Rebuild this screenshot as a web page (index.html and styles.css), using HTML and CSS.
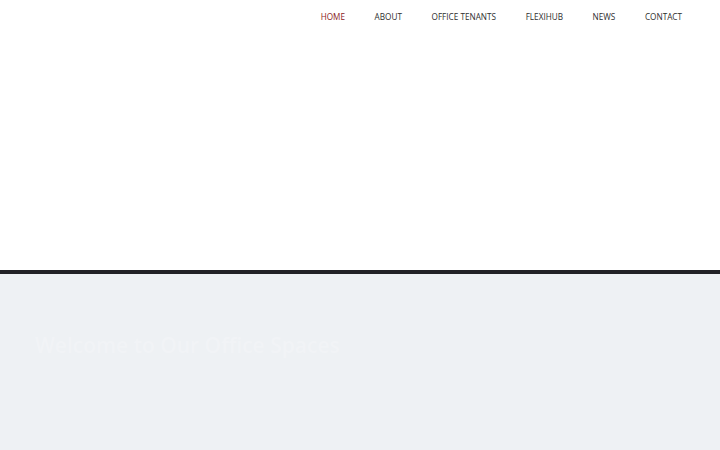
FILE: index.html
```html
<!DOCTYPE html>
<html lang="en">
<head>
<meta charset="utf-8">
<title>Home</title>
<link rel="stylesheet" href="styles.css">
</head>
<body>
<header class="site-header">
  <nav class="main-nav">
    <a class="nav-link active" href="#">HOME</a>
    <a class="nav-link" href="#">ABOUT</a>
    <a class="nav-link" href="#">OFFICE TENANTS</a>
    <a class="nav-link" href="#">FLEXIHUB</a>
    <a class="nav-link" href="#">NEWS</a>
    <a class="nav-link" href="#">CONTACT</a>
  </nav>
</header>
<div class="divider"></div>
<section class="hero">
  <h1 class="hero-title">Welcome to Our Office Spaces</h1>
</section>
</body>
</html>
```
FILE: styles.css
```css
html, body {
  margin: 0;
  padding: 0;
}
body {
  font-family: "Open Sans", "Liberation Sans", sans-serif;
  background: #eef1f4;
  height: 450px;
  overflow: hidden;
}
.site-header {
  background: #ffffff;
  height: 270px;
}
.main-nav {
  display: flex;
  justify-content: flex-end;
  gap: 29.6px;
  padding: 11px 38px 0 0;
}
.nav-link {
  font-size: 8.2px;
  line-height: 11px;
  color: #2e2e2e;
  text-decoration: none;
}
.nav-link.active {
  color: #8a1c1c;
}
.divider {
  height: 4px;
  background: #222226;
}
.hero {
  background: #eef1f4;
  padding: 56px 0 0 35px;
}
.hero-title {
  margin: 0;
  font-size: 21px;
  line-height: 30px;
  font-weight: 600;
  color: rgba(255, 255, 255, 0.2);
}
```
